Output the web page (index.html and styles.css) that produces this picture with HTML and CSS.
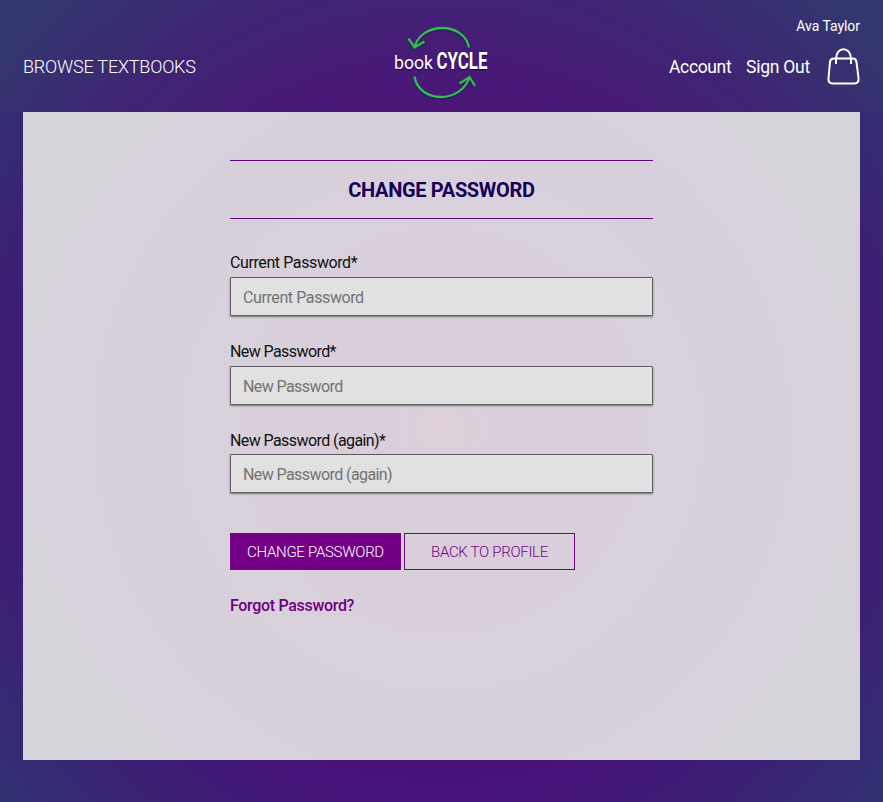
FILE: index.html
```html
<!DOCTYPE html>
<html lang="en">
<head>
<meta charset="utf-8">
<title>bookCYCLE</title>
<link rel="stylesheet" href="styles.css">
</head>
<body>
<header class="header">
  <a class="browse">BROWSE TEXTBOOKS</a>
  <svg class="logo" width="100" height="80" viewBox="1 0 100 80" aria-label="bookCYCLE">
    <g class="logo-arrows">
      <path d="M23.5 25.5C30 -.5 73 -.5 78 25.5M17.500 16.500L23.500 25.5L33.500 19.500"/>
      <path d="M23.500 54.500C28 81.500 70 82 78.500 55M68.500 61.500L78.500 55L84 64"/>
    </g>
    <text class="logo-book" x="3" y="47" textLength="39" lengthAdjust="spacingAndGlyphs">book</text>
    <text class="logo-cycle" x="45.500" y="47" textLength="51" lengthAdjust="spacingAndGlyphs">CYCLE</text>
  </svg>
  <div class="user">
    <span class="user-name">Ava Taylor</span>
    <nav class="links">
      <a class="account">Account</a>
      <a class="signout">Sign Out</a>
      <svg class="bag" width="33" height="38" viewBox="0 0 33 38">
        <path d="M7 11.500H26Q29 11.500 29.500 15L31.500 31Q32 36.500 27.500 36.500H5.500Q1 36.500 1.500 31L3 15Q3.500 11.500 7 11.500ZM9 17V12C9-1 24-1 24 12V17"/>
      </svg>
    </nav>
  </div>
</header>
<main class="panel">
  <form class="form">
    <h1 class="title"><span>CHANGE PASSWORD</span></h1>
    <div class="field current"><label for="a">Current Password*</label><input id="a" type="password" placeholder="Current Password"></div>
    <div class="field"><label for="b">New Password*</label><input id="b" type="password" placeholder="New Password"></div>
    <div class="field again"><label for="c">New Password (again)*</label><input id="c" type="password" placeholder="New Password (again)"></div>
    <div class="actions">
      <button class="btn primary" type="button">CHANGE PASSWORD</button>
      <button class="btn secondary" type="button">BACK TO PROFILE</button>
    </div>
    <a class="forgot">Forgot Password?</a>
  </form>
</main>
</body>
</html>
```
FILE: styles.css
```css
* { box-sizing: border-box; }
body {
  margin: 0;
  height: 802px;
  overflow: hidden;
  font-family: Roboto, "Open Sans", sans-serif;
  font-weight: 400;
  color: #111;
  background: radial-gradient(circle at 50% 430px, #740068 0, #580074 60px, #48127a 350px, #3c1f74 450px, #2e3470 590px);
}
.header {
  height: 112px;
  padding: 0 23px;
  display: grid;
  grid-template-columns: 1fr 100px 1fr;
  color: #fff;
  background: rgba(90, 90, 110, .1);
}
.browse { margin-top: 56px; font-size: 18px; font-weight: 300; line-height: 22px; letter-spacing: -.2px; white-space: nowrap; }
.logo { margin-top: 22px; overflow: visible; }
.logo-arrows { fill: none; stroke: #35bd50; stroke-width: 2.3; filter: drop-shadow(0 1px 1px #142050); }
.logo text { fill: #fff; text-shadow: 0 1px 1px #130043; }
.logo-book { font: 400 19px Roboto, sans-serif; }
.logo-cycle { font: 700 24px Roboto, sans-serif; }
.user { display: flex; flex-direction: column; align-items: flex-end; }
.user-name { margin-top: 17px; font-size: 14px; line-height: 18px; letter-spacing: -.05px; }
.links { display: flex; align-items: flex-start; margin-top: 12px; font-size: 17.500px; line-height: 22px; }
.account, .signout { margin-top: 9px; }
.account { width: 62px; margin-right: 15px; letter-spacing: -.35px; }
.signout { width: 65px; margin-right: 16px; letter-spacing: -.25px; white-space: nowrap; }
.bag { fill: none; stroke: #fff; stroke-width: 2; }
.panel {
  height: 648px;
  margin: 0 23px;
  padding-top: 48px;
  background: rgba(233, 234, 231, .885);
}
.form { width: 423px; margin: 0 auto; }
.title {
  height: 59px;
  margin: 0 0 32px;
  border: solid #5c087b;
  border-width: 1px 0;
  font-size: 20px;
  font-weight: 700;
  line-height: 59px;
  letter-spacing: -.33px;
  text-align: center;
  color: #160058;
}
.field { height: 89px; letter-spacing: -.58px; }
.current { letter-spacing: -.4px; }
label { display: block; height: 26px; font-size: 16px; line-height: 23px; }
.again { height: 88px; }
.again label { height: 25px; }
input {
  display: block;
  width: 100%;
  height: 39px;
  padding: 1px 12px 0;
  border: 1px solid #606064;
  border-radius: 1px;
  background: #e0e1e0;
  box-shadow: 0 1px 2px rgba(0, 0, 0, .45);
  font: 400 16px Roboto, sans-serif;
  letter-spacing: inherit;
}
input::placeholder { color: #737373; opacity: 1; }
.actions { display: flex; gap: 3px; padding-top: 16px; margin-bottom: 24px; }
.btn {
  width: 171px;
  height: 37px;
  padding: 0;
  border: 1px solid #6d087f;
  font: 300 15px Roboto, sans-serif;
  letter-spacing: -.3px;
  color: #750086;
  background: transparent;
}
.primary { color: #fff; background: #730087; }
.forgot { font-size: 16px; line-height: 23px; font-weight: 500; letter-spacing: -.32px; color: #6c007f; }
```
